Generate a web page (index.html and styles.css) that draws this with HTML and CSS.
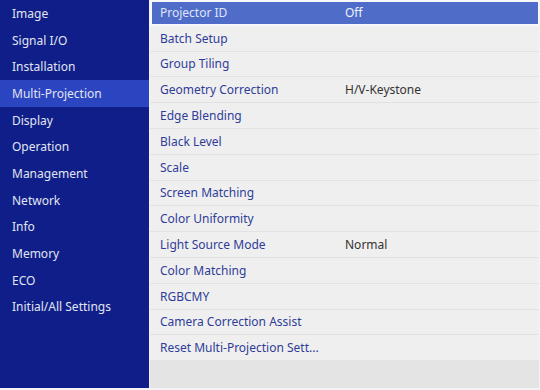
FILE: index.html
```html
<!DOCTYPE html>
<html lang="en">
<head>
    <meta charset="UTF-8">
    <title>Menu</title>
    <link rel="stylesheet" href="styles.css">
</head>
<body>
    <div class="menu">
        <ul class="sidebar">
            <li>Image</li>
            <li>Signal I/O</li>
            <li>Installation</li>
            <li class="active">Multi-Projection</li>
            <li>Display</li>
            <li>Operation</li>
            <li>Management</li>
            <li>Network</li>
            <li>Info</li>
            <li>Memory</li>
            <li>ECO</li>
            <li>Initial/All Settings</li>
        </ul>
        <div class="panel">
            <ul class="options">
                <li class="selected"><span class="name">Projector ID</span><span class="value">Off</span></li>
                <li><span class="name">Batch Setup</span></li>
                <li><span class="name">Group Tiling</span></li>
                <li><span class="name">Geometry Correction</span><span class="value">H/V-Keystone</span></li>
                <li><span class="name">Edge Blending</span></li>
                <li><span class="name">Black Level</span></li>
                <li><span class="name">Scale</span></li>
                <li><span class="name">Screen Matching</span></li>
                <li><span class="name">Color Uniformity</span></li>
                <li><span class="name">Light Source Mode</span><span class="value">Normal</span></li>
                <li><span class="name">Color Matching</span></li>
                <li><span class="name">RGBCMY</span></li>
                <li><span class="name">Camera Correction Assist</span></li>
                <li><span class="name">Reset Multi-Projection Sett...</span></li>
            </ul>
        </div>
    </div>
</body>
</html>
```

FILE: styles.css
```css
* {
    margin: 0;
    padding: 0;
    box-sizing: border-box;
}

body {
    font-family: 'Noto Sans', 'Open Sans', sans-serif;
    font-size: 12px;
    background-color: #f4f4f4;
    width: 540px;
    height: 390px;
    overflow: hidden;
}

.menu {
    display: flex;
    height: 388px;
}

.sidebar {
    list-style: none;
    width: 149px;
    background-color: #0f1e88;
}

.sidebar li {
    height: 26.67px;
    line-height: 25.67px;
    padding-top: 1px;
    padding-left: 12px;
    color: #e1e5f2;
}

.sidebar li.active {
    background-color: #2b44c0;
}

.panel {
    flex: 1;
    margin-left: 1px;
    margin-right: 1px;
    background-color: #e4e4e4;
}

.options {
    list-style: none;
}

.options li {
    display: flex;
    align-items: center;
    height: 25.8px;
    padding-left: 10px;
    background-color: #efefef;
    border-bottom: 1px solid #e2e2e2;
    color: #2f3d98;
}

.options li.selected {
    background-color: #4f6dc8;
    border: 2px solid #f7f8fc;
    border-right-width: 1px;
    padding-left: 8px;
    color: #dfe5f8;
}

.name {
    width: 185px;
}

.value {
    color: #333;
}

.selected .value {
    color: #eef1fb;
}
```
